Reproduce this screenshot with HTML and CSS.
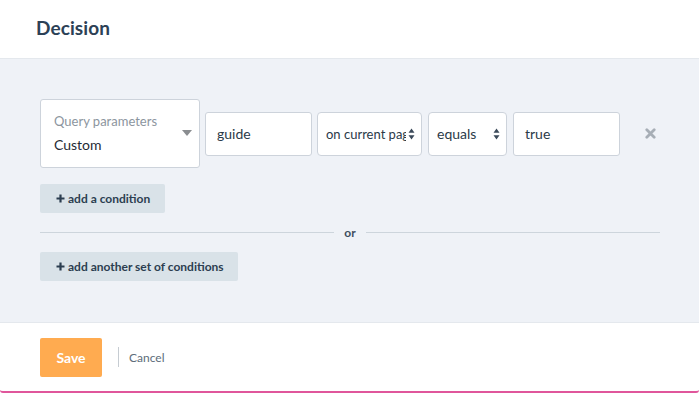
FILE: index.html
```html
<!DOCTYPE html>
<html>
<head>
<meta charset="utf-8">
<link rel="stylesheet" href="styles.css">
</head>
<body>
<div class="modal">
  <div class="header"><h1 class="title">Decision</h1></div>
  <div class="content">
    <div class="row">
      <div class="field query">
        <div class="q-text">
          <div class="q-label">Query parameters</div>
          <div class="q-value">Custom</div>
        </div>
        <span class="caret"></span>
      </div>
      <div class="field input w-guide">guide</div>
      <div class="field select w-page"><span class="sel-text">on current page</span>
        <svg class="updown" width="7" height="12" viewBox="0 0 7 12"><path d="M3.5 0.5 L6.5 4.8 L0.5 4.8 Z M3.5 11.5 L6.5 7.2 L0.5 7.2 Z" fill="#3b4a5a"/></svg>
      </div>
      <div class="field select w-equals"><span class="sel-text">equals</span>
        <svg class="updown" width="7" height="12" viewBox="0 0 7 12"><path d="M3.5 0.5 L6.5 4.8 L0.5 4.8 Z M3.5 11.5 L6.5 7.2 L0.5 7.2 Z" fill="#3b4a5a"/></svg>
      </div>
      <div class="field input w-true">true</div>
      <svg class="remove" width="11" height="11" viewBox="0 0 11 11"><path d="M1.8 1.8 L9.2 9.2 M9.2 1.8 L1.8 9.2" stroke="#a7aeb6" stroke-width="2.8" stroke-linecap="round"/></svg>
    </div>
    <button class="btn-grey add-cond"><svg class="plus" width="9" height="9" viewBox="0 0 9 9"><path d="M4.5 0.5 V8.5 M0.5 4.5 H8.5" stroke="#2c3e50" stroke-width="2.2"/></svg>add a condition</button>
    <div class="divider"><span class="line"></span><span class="or">or</span><span class="line"></span></div>
    <button class="btn-grey add-set"><svg class="plus" width="9" height="9" viewBox="0 0 9 9"><path d="M4.5 0.5 V8.5 M0.5 4.5 H8.5" stroke="#2c3e50" stroke-width="2.2"/></svg>add another set of conditions</button>
  </div>
  <div class="footer">
    <button class="save">Save</button>
    <span class="sep"></span>
    <span class="cancel">Cancel</span>
  </div>
</div>
</body>
</html>
```
FILE: styles.css
```css
* { box-sizing: border-box; }
html, body { margin: 0; padding: 0; background: #fff; }
body { font-family: Lato, "Open Sans", sans-serif; width: 699px; height: 393px; overflow: hidden; }
.modal { height: 393px; border-bottom: 2px solid #e0569b; border-radius: 0 0 3px 3px; display: flex; flex-direction: column; }
.header { height: 59px; border-bottom: 1px solid #e4e8ed; padding-left: 36px; padding-bottom: 3px; display: flex; align-items: center; }
.title { margin: 0; font-size: 19px; font-weight: 700; color: #2c4156; letter-spacing: 0.1px; }
.content { background: #eff2f7; height: 264px; border-bottom: 1px solid #e4e8ed; padding: 40px 39px 0 40px; }
.row { display: flex; align-items: center; }
.field { background: #fff; border: 1px solid #cdd3db; border-radius: 3px; font-size: 14px; color: #2b3a48; }
.query { width: 160px; height: 69px; display: flex; align-items: center; padding-left: 13px; padding-right: 7px; font-size: 13px; }
.q-text { flex: 1; }
.q-label { color: #8c959e; line-height: 16px; margin-top: -1px; }
.q-value { color: #1f2a35; line-height: 16px; margin-top: 8px; font-size: 14px; }
.caret { width: 0; height: 0; border-left: 5px solid transparent; border-right: 5px solid transparent; border-top: 6px solid #8a8d90; margin-top: -2px; }
.input { height: 44px; display: flex; align-items: center; padding-left: 11px; margin-left: 5px; }
.w-guide { width: 107px; }
.w-true { width: 107px; margin-left: 6px; }
.select { height: 44px; display: flex; align-items: center; padding-left: 8px; padding-right: 6px; margin-left: 5px; border-radius: 4px; }
.sel-text { flex: 1; white-space: nowrap; overflow: hidden; }
.w-page { width: 105px; font-size: 13px; }
.w-equals { width: 79px; margin-left: 6px; padding-left: 8px; }
.updown { flex: none; margin-left: 2px; }
.remove { margin-left: 25px; }
.btn-grey { display: flex; align-items: center; border: none; background: #d9e2e8; border-radius: 2px; height: 29px; padding: 0 0 0 16px; font-family: inherit; font-size: 12px; font-weight: 700; color: #2c3e50; }
.plus { flex: none; margin-right: 3px; margin-top: -1px; }
.add-cond { width: 125px; margin-top: 16px; }
.add-set { width: 198px; }
.divider { display: flex; align-items: center; height: 39px; width: 620px; }
.line { flex: 1; height: 1px; background: #cdd5dc; }
.or { font-size: 12px; font-weight: 700; color: #3e4e5e; padding: 0 10px; margin-top: -1px; }
.footer { flex: 1; display: flex; align-items: center; padding-left: 40px; }
.save { width: 62px; height: 39px; border: none; border-radius: 2px; background: #ffab50; color: #fff; font-family: inherit; font-weight: 700; font-size: 14px; padding: 0; }
.sep { width: 1px; height: 20px; background: #c6ccd2; margin-left: 16px; }
.cancel { font-size: 12px; color: #5d6c7a; margin-left: 10px; margin-top: 1px; }
```
